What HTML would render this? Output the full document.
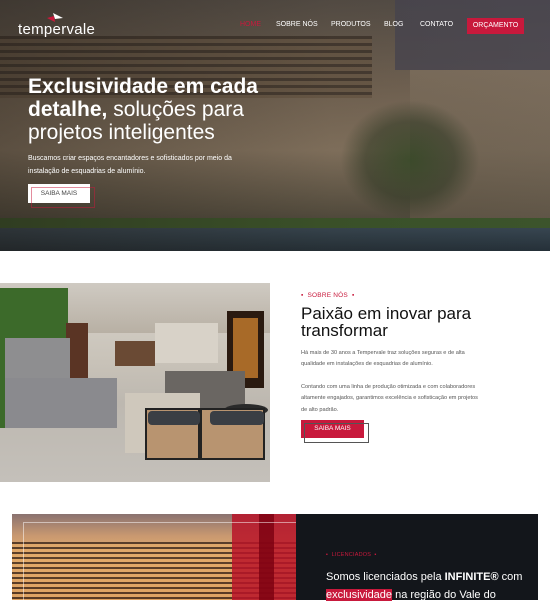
<!DOCTYPE html>
<html><head><meta charset="utf-8"><style>
*{margin:0;padding:0;box-sizing:border-box}
body{width:550px;height:600px;overflow:hidden;background:#fff;font-family:"Liberation Sans",sans-serif;position:relative}
.hero{position:absolute;left:0;top:0;width:550px;height:251px;overflow:hidden;
background:linear-gradient(180deg,#5a524a 0%,#7a6a58 35%,#8e7c66 60%,#5c5444 85%,#343a30 100%)}
.slats{position:absolute;left:0;top:36px;width:372px;height:62px;background:repeating-linear-gradient(180deg,#3c3128 0 3px,#6e5c48 3px 7px);opacity:.75}
.glass{position:absolute;left:410px;top:70px;width:140px;height:150px;background:linear-gradient(180deg,#8a7a66,#6a5e4c);opacity:.8}
.wall{position:absolute;left:395px;top:0;width:155px;height:70px;background:#4c4a55;opacity:.8}
.pool{position:absolute;left:0;top:228px;width:550px;height:23px;background:linear-gradient(180deg,#3a4a55,#26323a)}
.grass{position:absolute;left:0;top:218px;width:550px;height:12px;background:#3f5a2c}
.plants{position:absolute;left:340px;top:100px;width:140px;height:120px;background:radial-gradient(ellipse at center,rgba(50,75,35,.8) 0,rgba(40,55,30,.5) 45%,transparent 70%)}
.shade{position:absolute;left:0;top:0;width:550px;height:251px;background:linear-gradient(90deg,rgba(30,25,20,.45),rgba(30,25,20,.15) 60%,rgba(30,30,40,.1))}
.logo{position:absolute;left:18px;top:21px;color:#fff;font-size:15px;letter-spacing:.3px}
.logo .m{position:absolute;left:29px;top:-8px;width:16px;height:10px}
nav{position:absolute;top:21px;font-size:7px;color:#fff}
nav span{position:absolute;white-space:nowrap}
.orc{position:absolute;left:467px;top:18px;width:57px;height:16px;background:#c8193c;color:#fff;font-size:7px;text-align:center;line-height:16px}
h1{position:absolute;left:28px;top:75px;color:#fff;font-size:21px;line-height:23px;font-weight:normal}
h1 b{font-weight:bold}
.sub{position:absolute;left:28px;top:153px;color:#fff;font-size:7px;line-height:12.5px}
.btn1{position:absolute;left:28px;top:184px;width:62px;height:19px;background:#fff;color:#444;font-size:6.5px;text-align:center;line-height:19px}
.btn1:after{content:"";position:absolute;left:3px;top:3px;width:62px;height:19px;border:1px solid #c8193c;opacity:.5}
.img2{position:absolute;left:0;top:283px;width:270px;height:199px;overflow:hidden;background:linear-gradient(180deg,#d8d4cc 0,#c8c2b8 40%,#bdb8b0 60%,#c4c0ba 100%)}
.img2 div{position:absolute}
.kick{position:absolute;font-size:6.5px;color:#c8193c;letter-spacing:.2px}
h2{position:absolute;left:301px;top:305px;font-size:17px;line-height:17px;font-weight:normal;color:#111}
.p{position:absolute;left:301px;font-size:5.6px;line-height:11.3px;color:#555}
.btn2{position:absolute;left:301px;top:420px;width:63px;height:18px;background:#c8193c;color:#fff;font-size:6.5px;text-align:center;line-height:18px}
.btn2:after{content:"";position:absolute;left:3px;top:3px;width:63px;height:18px;border:1px solid #555}
.dark{position:absolute;left:296px;top:514px;width:242px;height:86px;background:#13161b}
.img3{position:absolute;left:12px;top:514px;width:284px;height:86px;background:linear-gradient(180deg,#8a7270 0,#c89870 25%,#e8b070 50%,#d08a50 100%);overflow:hidden}
</style></head><body>
<div class="hero">
<div class="wall"></div><div class="glass"></div><div class="slats"></div><div class="plants"></div><div class="grass"></div><div class="pool"></div><div class="shade"></div>
</div>
<div class="logo">tempervale<svg class="m" viewBox="0 0 16 10"><path d="M0 5L7 3L8 9Z" fill="#c8193c"/><path d="M6 0L16 5L8 6Z" fill="#fff"/></svg></div>
<nav><span style="left:240px;color:#c8193c">HOME</span><span style="left:276px">SOBRE NÓS</span><span style="left:331px">PRODUTOS</span><span style="left:384px">BLOG</span><span style="left:420px">CONTATO</span></nav>
<div class="orc">ORÇAMENTO</div>
<h1><b>Exclusividade em cada<br>detalhe,</b> soluções para<br>projetos inteligentes</h1>
<div class="sub">Buscamos criar espaços encantadores e sofisticados por meio da<br>instalação de esquadrias de alumínio.</div>
<div class="btn1">SAIBA MAIS</div>

<div class="img2">
<div style="left:0;top:0;width:270px;height:50px;background:linear-gradient(180deg,#cfcac2,#b8b0a4)"></div>
<div style="left:0;top:5px;width:68px;height:55px;background:#3c6a2a"></div>
<div style="left:0;top:55px;width:6px;height:90px;background:#3c6a2a"></div>
<div style="left:66px;top:40px;width:22px;height:55px;background:#5a3424"></div>
<div style="left:115px;top:58px;width:40px;height:25px;background:#6a4a34"></div>
<div style="left:5px;top:55px;width:65px;height:40px;background:#8e8e90"></div>
<div style="left:5px;top:95px;width:112px;height:50px;background:#8a8a8e"></div>
<div style="left:155px;top:40px;width:63px;height:40px;background:#d8d2c8"></div>
<div style="left:227px;top:28px;width:37px;height:77px;background:#2a1a10"></div>
<div style="left:233px;top:35px;width:25px;height:60px;background:#a86a28"></div>
<div style="left:165px;top:88px;width:80px;height:42px;background:#6a6662"></div>
<div style="left:224px;top:121px;width:44px;height:12px;border-radius:50%;background:#2a2a2a"></div>
<div style="left:125px;top:110px;width:75px;height:60px;background:#cfc8bc"></div>
<div style="left:145px;top:125px;width:55px;height:52px;border:2px solid #222;background:#b89470"></div>
<div style="left:200px;top:125px;width:65px;height:52px;border:2px solid #222;background:#b89470"></div>
<div style="left:148px;top:128px;width:52px;height:14px;background:#3a3e44;border-radius:4px"></div>
<div style="left:210px;top:128px;width:54px;height:14px;background:#3a3e44;border-radius:4px"></div>
</div>
<div class="kick" style="left:301px;top:292px">▪ &nbsp;SOBRE NÓS &nbsp;▪</div>
<h2>Paixão em inovar para<br>transformar</h2>
<div class="p" style="top:348px">Há mais de 30 anos a Tempervale traz soluções seguras e de alta<br>qualidade em instalações de esquadrias de alumínio.</div>
<div class="p" style="top:382px">Contando com uma linha de produção otimizada e com colaboradores<br>altamente engajados, garantimos excelência e sofisticação em projetos<br>de alto padrão.</div>
<div class="btn2">SAIBA MAIS</div>

<div class="img3">
<div style="position:absolute;left:0;top:28px;width:284px;height:58px;background:repeating-linear-gradient(180deg,#3a2518 0 2px,#e0a868 2px 5px);opacity:.8"></div>
<div style="position:absolute;left:220px;top:0;width:64px;height:86px;background:#b81428;opacity:.85"></div>
<div style="position:absolute;left:247px;top:0;width:15px;height:86px;background:#7a0010;opacity:.8"></div>
<div style="position:absolute;left:11px;top:8px;width:280px;height:80px;border:1px solid rgba(255,255,255,.5)"></div>
</div>
<div class="dark"></div>
<div class="kick" style="left:326px;top:552px;font-size:5.5px">▪ &nbsp;LICENCIADOS &nbsp;▪</div>
<div style="position:absolute;left:326px;top:568px;color:#fff;font-size:11px;line-height:18px">Somos licenciados pela <b>INFINITE®</b> com<br><span style="background:#c8193c">exclusividade</span> na região do Vale do</div>
</body></html>
